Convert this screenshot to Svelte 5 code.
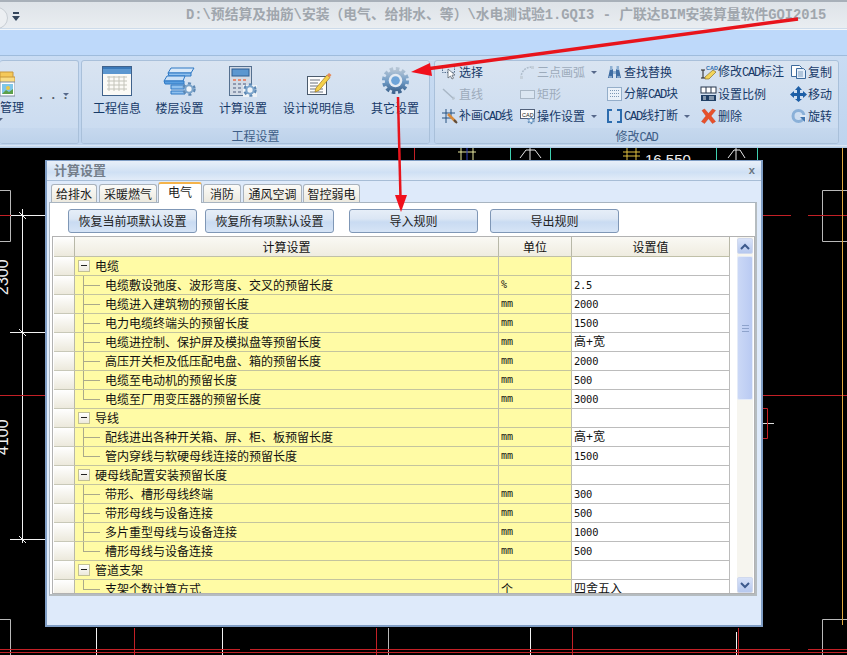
<script>
  const tabs = ['给排水', '采暖燃气', '电气', '消防', '通风空调', '智控弱电'];
  const buttons = ['恢复当前项默认设置', '恢复所有项默认设置', '导入规则', '导出规则'];
  const rows = [
    { g: '电缆' },
    { n: '电缆敷设弛度、波形弯度、交叉的预留长度', u: '%', v: '2.5' },
    { n: '电缆进入建筑物的预留长度', u: 'mm', v: '2000' },
    { n: '电力电缆终端头的预留长度', u: 'mm', v: '1500' },
    { n: '电缆进控制、保护屏及模拟盘等预留长度', u: 'mm', v: '高+宽', cjk: true },
    { n: '高压开关柜及低压配电盘、箱的预留长度', u: 'mm', v: '2000' },
    { n: '电缆至电动机的预留长度', u: 'mm', v: '500' },
    { n: '电缆至厂用变压器的预留长度', u: 'mm', v: '3000', last: true },
    { g: '导线' },
    { n: '配线进出各种开关箱、屏、柜、板预留长度', u: 'mm', v: '高+宽', cjk: true },
    { n: '管内穿线与软硬母线连接的预留长度', u: 'mm', v: '1500', last: true },
    { g: '硬母线配置安装预留长度' },
    { n: '带形、槽形母线终端', u: 'mm', v: '300' },
    { n: '带形母线与设备连接', u: 'mm', v: '500' },
    { n: '多片重型母线与设备连接', u: 'mm', v: '1000' },
    { n: '槽形母线与设备连接', u: 'mm', v: '500', last: true },
    { g: '管道支架' },
    { n: '支架个数计算方式', u: '个', v: '四舍五入', cjk: true, last: true }
  ];
  const toolCols = [
    { w: 78, items: [
      { k: 'select', t: '选择' },
      { k: 'line', t: '直线', off: true },
      { k: 'patch', t: '补画', m: 'CAD', t2: '线' }
    ]},
    { w: 87, items: [
      { k: 'arc', t: '三点画弧', off: true, caret: true },
      { k: 'rect', t: '矩形', off: true },
      { k: 'opset', t: '操作设置', caret: true }
    ]},
    { w: 94, items: [
      { k: 'find', t: '查找替换' },
      { k: 'explode', t: '分解', m: 'CAD', t2: '块' },
      { k: 'brk', m: 'CAD', t2: '线打断', caret: true }
    ]},
    { w: 90, items: [
      { k: 'annot', t: '修改', m: 'CAD', t2: '标注' },
      { k: 'scale', t: '设置比例' },
      { k: 'del', t: '删除' }
    ]},
    { w: 48, items: [
      { k: 'copy', t: '复制' },
      { k: 'move', t: '移动' },
      { k: 'rot', t: '旋转' }
    ]}
  ];
  const big = [
    { k: 'table', t: '工程信息', w: 62 },
    { k: 'layers', t: '楼层设置', w: 63 },
    { k: 'calc', t: '计算设置', w: 64 },
    { k: 'doc', t: '设计说明信息', w: 88 },
    { k: 'gear', t: '其它设置', w: 64 }
  ];
</script>

{#snippet cog(cx, cy, r)}
  <circle cx={cx} cy={cy} r={r} fill="none" stroke="#5d88b4" stroke-width={r * 0.45} stroke-dasharray={r * 0.55} />
  <circle cx={cx} cy={cy} r={r * 0.85} fill="#7ba4cb" />
  <circle cx={cx} cy={cy} r={r * 0.48} fill="#eef3f8" />
{/snippet}

{#snippet bigIcon(k)}
  {#if k === 'table'}
    <svg width="32" height="32" viewBox="0 0 32 32">
      <rect x="1.500" y="1.500" width="29" height="29" fill="#fbfaf6" stroke="#3f628c" />
      <rect x="2" y="2" width="28" height="7" fill="#5c97d0" />
      <path d="M2 2h28v2H2z" fill="#3a78b8" />
      <path d="M6 12h20M6 16h20M6 20h20M6 24h20M8 11v15M13 11v15M18 11v15M23 11v15" stroke="#c4c4ba" fill="none" />
    </svg>
  {:else if k === 'layers'}
    <svg width="34" height="30" viewBox="0 0 34 30">
      <path d="M8 1h23l-3 5H5z" fill="#d8e8f8" stroke="#2f79c4" />
      <path d="M5 6h23v3H6z" fill="#8fc0ee" stroke="#2f79c4" />
      <path d="M4 9h18l-2 5H1z" fill="#cbe0f6" stroke="#2f79c4" />
      <path d="M1 14h20v3H2z" fill="#5a9fe0" stroke="#2f79c4" />
      <path d="M8 18h14l-1 4H8zM8 24h14v3H8z" fill="#8fc0ee" stroke="#2f79c4" />
      {@render cog(26, 22, 5.500)}
    </svg>
  {:else if k === 'calc'}
    <svg width="30" height="32" viewBox="0 0 30 32">
      <rect x="1.500" y="1.500" width="22" height="29" fill="#d2dae5" stroke="#55708f" />
      <rect x="4" y="4" width="17" height="7" fill="#5c97d0" stroke="#2e5f94" />
      <path d="M5 14h3v2H5zM10 14h3v2h-3zM15 14h3v2h-3z" fill="#e58a72" />
      <path d="M5 18h3v2H5zM10 18h3v2h-3zM15 18h3v2h-3zM5 22h3v2H5zM10 22h3v2h-3zM5 26h3v2H5zM10 26h3v2h-3z" fill="#8f9ab0" />
      <rect x="15" y="20" width="14" height="12" fill="#eef2f6" />
      {@render cog(22, 25, 5.500)}
    </svg>
  {:else if k === 'doc'}
    <svg width="26" height="26" viewBox="0 0 26 26">
      <rect x="1.500" y="5.500" width="19" height="18" fill="#fdfdfd" stroke="#4a5a6c" />
      <path d="M4 9h10M4 12h8M4 15h9M4 18h13M4 21h13" stroke="#6a737e" />
      <path d="M10 17l11-13 3 2.500L13 19.500 9 21z" fill="#f4d04a" stroke="#a07a20" stroke-width=".7" />
      <path d="M21 4l2-2 2.500 2-2 2.500z" fill="#e58a5a" />
    </svg>
  {:else}
    <svg width="29" height="31" viewBox="0 0 30 32">
      <defs>
        <linearGradient id="gearG" x1="0" y1="0" x2="0" y2="1">
          <stop offset="0" stop-color="#b4c4d4" />
          <stop offset=".55" stop-color="#6f9bc6" />
          <stop offset="1" stop-color="#3f6690" />
        </linearGradient>
      </defs>
      <circle cx="15" cy="15" r="12" fill="none" stroke="url(#gearG)" stroke-width="4" stroke-dasharray="3.600 2.680" />
      <circle cx="15" cy="15" r="11" fill="url(#gearG)" />
      <circle cx="15" cy="15" r="7" fill="#e4ebf3" />
      <circle cx="15" cy="15" r="4.500" fill="#6ea4d8" />
    </svg>
  {/if}
{/snippet}

{#snippet smallIcon(k)}
  <svg class="tico" width="17" height="16" viewBox="0 0 17 16">
    {#if k === 'select'}
      <rect x="1.500" y="1.500" width="12" height="7" fill="none" stroke="#56708f" stroke-dasharray="1.500 1" />
      <path d="M7 5l0 9 2.500-2 1.500 3 1.500-.8-1.500-3 3-.2z" fill="#fff" stroke="#5a6470" stroke-width=".8" />
    {:else if k === 'line'}
      <path d="M2 3l11 10" stroke="#a9b7c6" stroke-width="1.500" />
      <path d="M11 14l3-1-1-3z" fill="#b8c4d0" />
    {:else if k === 'patch'}
      <path d="M1 5h13M1 10h11M5 1v14M10 1v9" stroke="#26507e" fill="none" />
      <path d="M7 6l8 8" stroke="#d88a3a" stroke-width="2.500" />
      <path d="M13 12l3 3" stroke="#5a4a3a" stroke-width="2" />
    {:else if k === 'arc'}
      <path d="M2 14C2 7 7 3 13 3" fill="none" stroke="#aebccb" stroke-width="1.500" stroke-dasharray="2 1" />
      <rect x="1" y="12" width="3" height="3" fill="#c5d0db" />
      <rect x="12" y="2" width="3" height="3" fill="#c5d0db" />
    {:else if k === 'rect'}
      <rect x="1.500" y="4.500" width="14" height="8" fill="#dbe6f2" stroke="#a9b7c6" />
    {:else if k === 'opset'}
      <rect x="1.500" y="1.500" width="14" height="9" fill="#fdfdfd" stroke="#50607a" />
      <text x="3" y="8.500" class="tiny">CAD</text>
      {@render cog(12, 12.500, 3)}
    {:else if k === 'find'}
      <path d="M2 14l2-9h3v9zM10 14V5h3l2 9z" fill="#3f6da3" />
      <path d="M4 2h2.500v4H4zM10.500 2H13v4h-2.500zM7 7h3v3H7z" fill="#8fb0d2" />
      <path d="M3 13h3M11 13h3" stroke="#cfe0f0" />
    {:else if k === 'explode'}
      <rect x="1.500" y="1.500" width="14" height="13" fill="#eaf1f9" stroke="#4b739d" stroke-dasharray="1 1" />
      <path d="M4 4.500h9M4 7.500h9M4 10.500h9" stroke="#7c97b4" stroke-dasharray="1 1" />
    {:else if k === 'brk'}
      <path d="M6 2H2v12h4M11 2h4v12h-4" fill="none" stroke="#2c6cae" stroke-width="2" />
    {:else if k === 'annot'}
      <path d="M1 6h4M3 6v8M1 14h4" stroke="#222" fill="none" />
      <text x="6" y="5.500" class="tiny blue">CAD</text>
      <path d="M5 13l8-7 3 2-7 7H5z" fill="#f3d55a" stroke="#8a7330" stroke-width=".7" />
    {:else if k === 'scale'}
      <rect x="1" y="1" width="15" height="6" fill="#fff" stroke="#26364c" />
      <path d="M6 1v6M11 1v6" stroke="#26364c" />
      <path d="M1 9h15v6H1z" fill="#1f3e63" />
      <path d="M3 11h3M9 11h5M3 13h3M9 13h5" stroke="#e8eef5" />
    {:else if k === 'del'}
      <path d="M2 2.500L4.500 1 8.500 5.500 12.500 1 15.500 2.500 11 8l4.500 5.500L12.500 15.500 8.500 10.500 4.500 15.500 1.500 13.500 6 8z" fill="#e8502a" stroke="#c94020" stroke-width=".5" />
    {:else if k === 'copy'}
      <path d="M1.500 1.500h8l2 2v9h-10z" fill="#fdfdfd" stroke="#3d6a9c" />
      <path d="M6.500 4.500h7l2 2v8h-9z" fill="#e4eefa" stroke="#3d6a9c" />
      <path d="M8 8h5M8 10h5M8 12h5" stroke="#7d9cbd" />
    {:else if k === 'move'}
      <path d="M8.500 0l3.500 4H10v3h3V5l4 3.500L13 12v-2h-3v3h2l-3.500 3L5 13h2v-3H4v2L0 8.500 4 5v2h3V4H5z" fill="#1e5fa6" />
    {:else if k === 'rot'}
      <circle cx="8.500" cy="8" r="5.500" fill="none" stroke="#8ab0d8" stroke-width="3" />
      <path d="M10 7h6v7h-2v-4h-4z" fill="#dfe9f5" />
      <path d="M10 9l5 5v-5z" fill="#3f74ad" />
    {/if}
  </svg>
{/snippet}

<div class="app">
  <header class="title">
    <span class="orb"></span>
    <svg class="qat" width="8" height="9" viewBox="0 0 8 9"><path d="M1 0h6v2H1zM0 4h8L4 9z" fill="#34465c" /></svg>
    <span class="caption">D:\预结算及抽筋\安装（电气、给排水、等）\水电测试验1.GQI3 - 广联达BIM安装算量软件GQI2015</span>
  </header>
  <div class="tabband"></div>

  <section class="ribbon">
    <div class="panel first">
      <div class="body first-body">
        <div class="clip-btn">
          <svg width="15" height="28" viewBox="0 0 15 28">
            <path d="M0 3h13v6H0z" fill="#f5c95a" stroke="#c8973a" />
            <path d="M0 8h15v8H0z" fill="#f9dc84" stroke="#c8973a" />
            <rect x="0" y="13" width="15" height="14" fill="#fff" stroke="#7d8aa0" />
            <rect x="2" y="15" width="11" height="10" fill="#7fc6e8" />
            <path d="M2 25l4-4 3 2 4-3v5z" fill="#5ca04a" />
            <circle cx="8" cy="19" r="2" fill="#e8c84a" />
          </svg>
          <span class="label">管理</span>
          <i class="caret tiny-caret"></i>
        </div>
        <span class="dots">· · ·</span>
        <i class="caret dots-caret"></i>
      </div>
      <div class="cap"></div>
    </div>

    <div class="panel second">
      <div class="body bigs">
        {#each big as b}
          <div class="bigbtn" style="width:{b.w}px">
            <div class="bigico">{@render bigIcon(b.k)}</div>
            <span class="label">{b.t}</span>
          </div>
        {/each}
      </div>
      <div class="cap">工程设置</div>
    </div>

    <div class="panel third">
      <div class="body tools">
        {#each toolCols as c}
          <div class="toolcol" style="width:{c.w}px">
            {#each c.items as it}
              <div class="tool" class:off={it.off}>
                {@render smallIcon(it.k)}
                <span class="tlabel">{it.t ?? ''}{#if it.m}<span class="m">{it.m}</span>{/if}{it.t2 ?? ''}</span>
                {#if it.caret}<i class="caret tool-caret"></i>{/if}
              </div>
            {/each}
          </div>
        {/each}
      </div>
      <div class="cap">修改<span class="m">CAD</span></div>
    </div>
  </section>
  <div class="ribbon-foot"></div>

  <main class="canvas">
    <svg class="cad" width="847" height="507" viewBox="0 148 847 507">
      <g fill="none" stroke="#f2f2f2" stroke-width="1">
        <path d="M22.500 209V543M11 215.500H45M10 332.500H45M10 539.500H45M19 212l7 7M19 329l7 7M19 536l7 7" />
        <path d="M96.500 628V655M222.500 628V655M530.500 628V655M736.500 632V655" />
      </g>
      <g fill="none" stroke="#b9b9b9" stroke-width="1">
        <path d="M0 190.500H10.500V241.500H0M0 619.500H10.500V655" />
        <path d="M847 190.500H822.500V241.500H847M847 619.500H822.500V655M388.500 628V655" />
        <path d="M763 423.500H774" stroke="#ddd" />
      </g>
      <g fill="none" stroke="#c32026" stroke-width="1">
        <path d="M0 215.500H11M0 395.500H45M763 395.500H847M763 215.500H791M808 215.500H847" />
        <path d="M0 649.500H240M250 649.500H790M808 649.500H847M0 652.500H847" />
        <path d="M134.500 628V655M376.500 628V655M572.500 628V655M738.500 628V655M763 408.500H767.500V438.500H763M414.500 148V160" />
      </g>
      <path d="M842.500 148V625" stroke="#e0a93f" fill="none" />
      <g fill="none" stroke="#3fd0b0">
        <path d="M510.500 148V160M550.500 148V160M716.500 148V160M757.500 148V160" />
      </g>
      <g fill="none" stroke="#e8e8a0">
        <path d="M458 152H476M461 148V160M473 148V160" />
      </g>
      <path d="M467 148V160" stroke="#3040c0" />
      <path d="M623 152H640M623 156H640M627 148V160M636 148V160" stroke="#e0c040" fill="none" />
      <path d="M520 158l6-8h9l6 8M530 148V160" stroke="#e8e8e8" fill="none" />
      <path d="M728 158l6-8h6l5 8M736 148V160" stroke="#e8e8e8" fill="none" />
      <text x="645" y="165" class="dim wide">16.550</text>
      <text transform="translate(8 295) rotate(-90)" class="dim big">2300</text>
      <text transform="translate(8 455) rotate(-90)" class="dim big">4100</text>
    </svg>
  </main>

  <div class="dialog">
    <div class="dlg-title">
      <span>计算设置</span>
      <span class="close">x</span>
    </div>
    <div class="tabs">
      {#each tabs as t, i}
        <div class="tab" class:active={i === 2}>{t}</div>
      {/each}
    </div>
    <div class="sheet">
      <div class="actions">
        {#each buttons as b}
          <div class="btn">{b}</div>
        {/each}
      </div>
      <div class="grid">
        <div class="table">
          <div class="row head">
            <div class="rh"></div>
            <div class="hc">计算设置</div>
            <div class="hc">单位</div>
            <div class="hc">设置值</div>
          </div>
          {#each rows as r}
            <div class="row">
              <div class="rh"></div>
              <div class="name" class:group={r.g} class:child={!r.g} class:last={r.last}>
                {#if r.g}<span class="exp"></span>{/if}{r.g ?? r.n}
              </div>
              <div class="unit" class:cjk={r.u === '个'}>{r.u ?? ''}</div>
              <div class="val" class:cjk={r.cjk}>{r.v ?? ''}</div>
            </div>
          {/each}
        </div>
        <div class="sb">
          <div class="sbbtn"><svg width="10" height="7" viewBox="0 0 10 7"><path d="M1 6l4-4 4 4" fill="none" stroke="#3d5a8c" stroke-width="2" /></svg></div>
          <div class="thumb"><span></span></div>
          <div class="sbrest"></div>
          <div class="sbbtn"><svg width="10" height="7" viewBox="0 0 10 7"><path d="M1 1l4 4 4-4" fill="none" stroke="#3d5a8c" stroke-width="2" /></svg></div>
        </div>
      </div>
    </div>
  </div>

  <svg class="arrows" width="847" height="655" viewBox="0 0 847 655">
    <path d="M798 19L426 69" stroke="#e8141c" stroke-width="3.500" fill="none" />
    <path d="M411 72l19-9 2 13z" fill="#f0101c" />
    <path d="M398 97L400.500 198" stroke="#e8141c" stroke-width="2.500" fill="none" />
    <path d="M401 212l-6-17h12z" fill="#f0101c" />
  </svg>
</div>

<style>
  :global(body) { margin: 0; background: #000; overflow: hidden; }
  .app {
    position: relative;
    width: 847px;
    height: 655px;
    display: flex;
    flex-direction: column;
    overflow: hidden;
    background: #000;
    font: 12px "Noto Sans CJK SC", "Liberation Sans", sans-serif;
    color: #111;
  }
  .m { font-family: "Liberation Mono", monospace; letter-spacing: -1.2px; }

  .title {
    height: 29px;
    flex: none;
    box-sizing: border-box;
    border-top: 2px solid #a8b0b9;
    background: linear-gradient(#dee3e8, #e9edf1);
    border-bottom: 1px solid #cddbea;
    position: relative;
    display: flex;
    align-items: center;
  }
  .orb {
    position: absolute;
    left: -14px;
    top: 5px;
    width: 20px;
    height: 20px;
    border-radius: 50%;
    background: #eceff2;
    border: 1px solid #c8ced4;
  }
  .qat { position: absolute; left: 12px; top: 10px; }
  .caption {
    position: absolute;
    left: 186px;
    top: 6px;
    white-space: nowrap;
    color: #a0a6ad;
    font: bold 13.800px/16px "Liberation Mono", "Noto Sans CJK SC", monospace;
  }
  .tabband {
    height: 27px;
    flex: none;
    background: #bed9fa;
    border-top: 1px solid #f2f6fa;
    border-bottom: 1px solid #9fbcdc;
    box-sizing: border-box;
  }
  .ribbon {
    height: 89px;
    flex: none;
    background: linear-gradient(#c9dcf3, #bed4ee);
    display: flex;
    padding: 4px 0 1px;
    box-sizing: border-box;
  }
  .ribbon-foot {
    height: 3px;
    flex: none;
    background: linear-gradient(#e3edf8, #a9c4e2);
  }
  .panel {
    box-sizing: border-box;
    border: 1px solid #a9c0da;
    border-radius: 3px;
    display: flex;
    flex-direction: column;
    overflow: hidden;
    background: linear-gradient(#d9e4f1, #c8daf0);
  }
  .first { width: 79px; margin-right: 2px; border-left: 0; }
  .second { width: 349px; margin-right: 4px; }
  .third { width: 405px; }
  .body { height: 67px; flex: none; display: flex; }
  .cap {
    flex: 1;
    background: linear-gradient(#c6d8ee, #bdd2ea);
    color: #3f5f88;
    text-align: center;
    font-size: 12px;
    line-height: 15px;
  }
  .first-body { position: relative; }
  .clip-btn { width: 36px; display: flex; flex-direction: column; padding-top: 8px; position: relative; }
  .label { color: #173a68; white-space: nowrap; line-height: 16px; }
  .clip-btn .label { margin-top: 2px; }
  .dots { color: #555f6c; margin-top: 30px; font-size: 10px; line-height: 14px; width: 26px; letter-spacing: 0; white-space: nowrap; }
  .caret {
    display: block;
    width: 0;
    height: 0;
    border-left: 3px solid transparent;
    border-right: 3px solid transparent;
    border-top: 3px solid #56688a;
  }
  .tiny-caret { margin: 3px 0 0 -3px; }
  .dots-caret { margin: 32px 0 0 1px; }
  .bigs { padding-left: 4px; }
  .bigbtn { display: flex; flex-direction: column; align-items: center; }
  .bigico { height: 37px; display: flex; align-items: flex-end; padding-bottom: 1px; box-sizing: border-box; }
  .bigbtn .label { margin-top: 2px; }
  .tools { padding-left: 6px; }
  .toolcol { display: flex; flex-direction: column; }
  .tool { height: 22px; display: flex; align-items: center; color: #173a68; white-space: nowrap; }
  .tool.off { color: #9dabbb; }
  .tico { flex: none; margin-right: 1px; overflow: visible; }
  .tlabel { line-height: 16px; }
  .tool-caret { margin-left: 6px; }
  .tiny { font: 5.500px "Liberation Sans", sans-serif; fill: #222; }
  .tiny.blue { fill: #2c6cae; font-weight: bold; }

  .canvas { flex: 1; position: relative; background: #000; }
  .cad { position: absolute; left: 0; top: 0; }
  .dim { fill: #eee; font-family: "Liberation Sans", sans-serif; }
  .dim.wide { font-size: 15px; }
  .dim.big { font-size: 16px; }

  .dialog {
    position: absolute;
    left: 45px;
    top: 160px;
    width: 718px;
    height: 467px;
    box-sizing: border-box;
    border: 1px solid #7f9dc4;
    border-width: 1px 2px 2px 2px;
    background: #deeafa;
    display: flex;
    flex-direction: column;
  }
  .dlg-title {
    height: 20px;
    flex: none;
    box-sizing: border-box;
    background: linear-gradient(#e9f0f9 0%, #cfe0f4 60%, #e2ecf8 100%);
    border-bottom: 1px solid #a7bdd6;
    display: flex;
    justify-content: space-between;
    padding: 0 6px 0 7px;
    color: #747e8a;
    font-weight: bold;
    font-size: 13px;
    line-height: 17px;
  }
  .close { font: bold 11px/20px "Liberation Mono", monospace; color: #6a7480; }
  .tabs { height: 21px; flex: none; display: flex; align-items: flex-end; padding-left: 4px; gap: 2px; position: relative; z-index: 1; }
  .tab {
    height: 18px;
    box-sizing: border-box;
    padding: 0 4px;
    border: 1px solid #a9b2bc;
    border-bottom: 0;
    border-radius: 3px 3px 0 0;
    background: linear-gradient(#fbfbf8, #ece9df);
    line-height: 18px;
    color: #1a1a1a;
  }
  .tab:nth-child(4) { padding: 0 6px; }
  .tab:nth-child(5) { padding: 0 4.500px; }
  .tab:nth-child(6) { margin-left: -1px; padding: 0 3.500px; }
  .tab.active {
    height: 21px;
    margin-bottom: -1px;
    background: #fff;
    border-top: 2px solid #f4b34a;
    line-height: 16px;
    padding: 0 9px 3px;
    margin-left: -1px;
    margin-right: -1px;
  }
  .sheet {
    width: 708px;
    height: 394px;
    margin-left: 2px;
    flex: none;
    box-sizing: border-box;
    background: #fff;
    border: 1px solid #a8b4c0;
    border-right: 2px solid #b5bcc0;
    border-bottom: 2px solid #b5bcc0;
    padding: 0 0 0 2px;
  }
  .actions { display: flex; padding: 6px 0 3px 16px; height: 33px; box-sizing: border-box; }
  .btn {
    width: 129px;
    height: 24px;
    box-sizing: border-box;
    border: 1px solid #7f97b6;
    border-radius: 3px;
    background: linear-gradient(#e6eef8 0%, #dbe6f4 40%, #c9dbf2 55%, #d6e4f6 100%);
    text-align: center;
    line-height: 22px;
    color: #222;
  }
  .btn:nth-child(2) { margin-left: 8px; }
  .btn:nth-child(3) { margin-left: 15px; }
  .btn:nth-child(4) { margin-left: 12px; }
  .grid {
    width: 703px;
    height: 358px;
    box-sizing: border-box;
    border: 1px solid #b2b2b2;
    display: flex;
    overflow: hidden;
    padding-left: 1px;
    background: #fff;
  }
  .table { width: 676px; flex: none; overflow: hidden; }
  .row {
    display: grid;
    grid-template-columns: 21px 424px 73px 158px;
    height: 19px;
    box-sizing: border-box;
  }
  .row.head { height: 20px; }
  .rh {
    background: linear-gradient(#fff, #ece9dc);
    border-right: 1px solid #b8b8a8;
    border-bottom: 1px solid #c8c8b8;
    box-sizing: border-box;
  }
  .hc {
    text-align: center;
    background: linear-gradient(#faf9f4, #efece0);
    border-right: 1px solid #b8b8a8;
    border-bottom: 1px solid #c0c0a8;
    line-height: 19px;
    box-sizing: border-box;
  }
  .name, .unit, .val {
    box-sizing: border-box;
    line-height: 18px;
    white-space: nowrap;
    overflow: hidden;
    border-right: 1px solid #bdbdb0;
    border-bottom: 1px solid #c4c49e;
  }
  .name, .unit { background: #fffba5; }
  .name { position: relative; color: #111; }
  .group { padding-left: 20px; }
  .child { padding-left: 30px; }
  .child::before {
    content: "";
    position: absolute;
    left: 8px;
    top: 0;
    bottom: -1px;
    border-left: 1px solid #aaa98a;
  }
  .child.last::before { bottom: 9px; }
  .child::after {
    content: "";
    position: absolute;
    left: 8px;
    top: 9px;
    width: 17px;
    border-top: 1px solid #aaa98a;
  }
  .exp {
    position: absolute;
    left: 3px;
    top: 3px;
    width: 12px;
    height: 12px;
    box-sizing: border-box;
    border: 1px solid #c2c096;
    background: linear-gradient(#fff, #ece9dc);
  }
  .exp::after {
    content: "";
    position: absolute;
    left: 2px;
    right: 2px;
    top: 4px;
    border-top: 1px solid #222;
  }
  .unit { padding-left: 2px; font: 10px/18px "DejaVu Sans Mono", monospace; }
  .unit.cjk { font: 12px/18px "Noto Sans CJK SC", sans-serif; }
  .val {
    padding-left: 2px;
    background: #fff;
    border-bottom-color: #bcbcbc;
    border-right-color: #bcbcbc;
    font: 10.400px/18px "DejaVu Sans Mono", "Noto Sans CJK SC", monospace;
    letter-spacing: -.2px;
  }
  .val.cjk { font: 12px/18px "Liberation Sans", "Noto Sans CJK SC", sans-serif; letter-spacing: 0; }
  .sb {
    width: 16px;
    margin-left: 7px;
    flex: none;
    display: flex;
    flex-direction: column;
    padding-top: 1px;
    background: #f6f5ef;
  }
  .sbbtn {
    height: 16px;
    flex: none;
    box-sizing: border-box;
    border: 1px solid #d0d9ee;
    border-radius: 2px;
    background: linear-gradient(#d8e2f8, #b6c8ee);
    display: flex;
    align-items: center;
    justify-content: center;
  }
  .thumb {
    height: 144px;
    margin-top: 2px;
    flex: none;
    box-sizing: border-box;
    border: 1px solid #e4ebf8;
    border-radius: 2px;
    background: linear-gradient(90deg, #cbd8f6, #b9caf2);
    display: flex;
    align-items: center;
    justify-content: center;
  }
  .thumb span {
    width: 7px;
    height: 7px;
    background: repeating-linear-gradient(#8ea3cc 0 1px, transparent 1px 3px);
  }
  .sbrest { flex: 1; }
  .arrows { position: absolute; left: 0; top: 0; pointer-events: none; }
</style>
